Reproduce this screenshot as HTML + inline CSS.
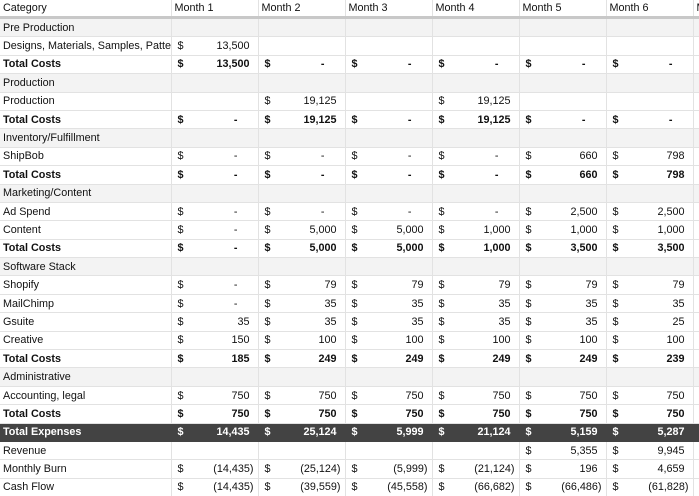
<!DOCTYPE html>
<html><head><meta charset="utf-8"><style>
html,body{margin:0;padding:0;background:#fff;width:699px;height:496px;overflow:hidden}
#w{width:699px;height:496px;overflow:hidden;position:relative}
table{border-collapse:collapse;table-layout:fixed;width:780px;font-family:"Liberation Sans",Arial,sans-serif;font-size:10.8px;color:#111}
td{height:17.4px;border:1px solid #e2e2e2;padding:0 8px 0 6px;text-align:right;white-space:nowrap;overflow:hidden;line-height:16px}
td:first-child{text-align:left;padding-left:3px;border-left:none}
tr.h td{height:15px;border-top:none;border-bottom:3px solid #c8c8c8;text-align:left;padding-left:3px}
tr.s td{background:#f3f3f3}
tr.t td{font-weight:bold}
tr.x td{background:#434343;color:#fff;font-weight:bold;border-color:#434343}
i{float:left;font-style:normal}
td.z{padding-right:20px}
td.p{padding-right:4px}
</style></head><body><div id="w">
<table>
<colgroup><col style="width:171px"><col style="width:87px"><col style="width:87px"><col style="width:87px"><col style="width:87px"><col style="width:87px"><col style="width:87px"><col style="width:87px"></colgroup>
<tr class="h"><td>Category</td><td>Month 1</td><td>Month 2</td><td>Month 3</td><td>Month 4</td><td>Month 5</td><td>Month 6</td><td>Month 7</td></tr>
<tr class="s"><td>Pre Production</td><td></td><td></td><td></td><td></td><td></td><td></td><td></td></tr>
<tr><td>Designs, Materials, Samples, Patte</td><td><i>$</i>13,500</td><td></td><td></td><td></td><td></td><td></td><td></td></tr>
<tr class="t"><td>Total Costs</td><td><i>$</i>13,500</td><td class="z"><i>$</i>-</td><td class="z"><i>$</i>-</td><td class="z"><i>$</i>-</td><td class="z"><i>$</i>-</td><td class="z"><i>$</i>-</td><td></td></tr>
<tr class="s"><td>Production</td><td></td><td></td><td></td><td></td><td></td><td></td><td></td></tr>
<tr><td>Production</td><td></td><td><i>$</i>19,125</td><td></td><td><i>$</i>19,125</td><td></td><td></td><td></td></tr>
<tr class="t"><td>Total Costs</td><td class="z"><i>$</i>-</td><td><i>$</i>19,125</td><td class="z"><i>$</i>-</td><td><i>$</i>19,125</td><td class="z"><i>$</i>-</td><td class="z"><i>$</i>-</td><td></td></tr>
<tr class="s"><td>Inventory/Fulfillment</td><td></td><td></td><td></td><td></td><td></td><td></td><td></td></tr>
<tr><td>ShipBob</td><td class="z"><i>$</i>-</td><td class="z"><i>$</i>-</td><td class="z"><i>$</i>-</td><td class="z"><i>$</i>-</td><td><i>$</i>660</td><td><i>$</i>798</td><td></td></tr>
<tr class="t"><td>Total Costs</td><td class="z"><i>$</i>-</td><td class="z"><i>$</i>-</td><td class="z"><i>$</i>-</td><td class="z"><i>$</i>-</td><td><i>$</i>660</td><td><i>$</i>798</td><td></td></tr>
<tr class="s"><td>Marketing/Content</td><td></td><td></td><td></td><td></td><td></td><td></td><td></td></tr>
<tr><td>Ad Spend</td><td class="z"><i>$</i>-</td><td class="z"><i>$</i>-</td><td class="z"><i>$</i>-</td><td class="z"><i>$</i>-</td><td><i>$</i>2,500</td><td><i>$</i>2,500</td><td></td></tr>
<tr><td>Content</td><td class="z"><i>$</i>-</td><td><i>$</i>5,000</td><td><i>$</i>5,000</td><td><i>$</i>1,000</td><td><i>$</i>1,000</td><td><i>$</i>1,000</td><td></td></tr>
<tr class="t"><td>Total Costs</td><td class="z"><i>$</i>-</td><td><i>$</i>5,000</td><td><i>$</i>5,000</td><td><i>$</i>1,000</td><td><i>$</i>3,500</td><td><i>$</i>3,500</td><td></td></tr>
<tr class="s"><td>Software Stack</td><td></td><td></td><td></td><td></td><td></td><td></td><td></td></tr>
<tr><td>Shopify</td><td class="z"><i>$</i>-</td><td><i>$</i>79</td><td><i>$</i>79</td><td><i>$</i>79</td><td><i>$</i>79</td><td><i>$</i>79</td><td></td></tr>
<tr><td>MailChimp</td><td class="z"><i>$</i>-</td><td><i>$</i>35</td><td><i>$</i>35</td><td><i>$</i>35</td><td><i>$</i>35</td><td><i>$</i>35</td><td></td></tr>
<tr><td>Gsuite</td><td><i>$</i>35</td><td><i>$</i>35</td><td><i>$</i>35</td><td><i>$</i>35</td><td><i>$</i>35</td><td><i>$</i>25</td><td></td></tr>
<tr><td>Creative</td><td><i>$</i>150</td><td><i>$</i>100</td><td><i>$</i>100</td><td><i>$</i>100</td><td><i>$</i>100</td><td><i>$</i>100</td><td></td></tr>
<tr class="t"><td>Total Costs</td><td><i>$</i>185</td><td><i>$</i>249</td><td><i>$</i>249</td><td><i>$</i>249</td><td><i>$</i>249</td><td><i>$</i>239</td><td></td></tr>
<tr class="s"><td>Administrative</td><td></td><td></td><td></td><td></td><td></td><td></td><td></td></tr>
<tr><td>Accounting, legal</td><td><i>$</i>750</td><td><i>$</i>750</td><td><i>$</i>750</td><td><i>$</i>750</td><td><i>$</i>750</td><td><i>$</i>750</td><td></td></tr>
<tr class="t"><td>Total Costs</td><td><i>$</i>750</td><td><i>$</i>750</td><td><i>$</i>750</td><td><i>$</i>750</td><td><i>$</i>750</td><td><i>$</i>750</td><td></td></tr>
<tr class="x"><td>Total Expenses</td><td><i>$</i>14,435</td><td><i>$</i>25,124</td><td><i>$</i>5,999</td><td><i>$</i>21,124</td><td><i>$</i>5,159</td><td><i>$</i>5,287</td><td></td></tr>
<tr><td>Revenue</td><td></td><td></td><td></td><td></td><td><i>$</i>5,355</td><td><i>$</i>9,945</td><td></td></tr>
<tr><td>Monthly Burn</td><td class="p"><i>$</i>(14,435)</td><td class="p"><i>$</i>(25,124)</td><td class="p"><i>$</i>(5,999)</td><td class="p"><i>$</i>(21,124)</td><td><i>$</i>196</td><td><i>$</i>4,659</td><td></td></tr>
<tr><td>Cash Flow</td><td class="p"><i>$</i>(14,435)</td><td class="p"><i>$</i>(39,559)</td><td class="p"><i>$</i>(45,558)</td><td class="p"><i>$</i>(66,682)</td><td class="p"><i>$</i>(66,486)</td><td class="p"><i>$</i>(61,828)</td><td></td></tr>
</table>
</div></body></html>
